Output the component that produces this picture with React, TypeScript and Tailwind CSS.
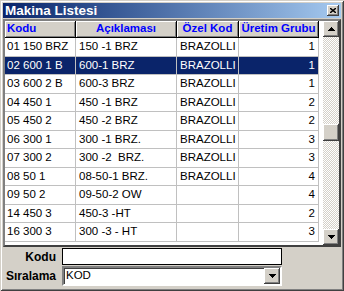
const raised =
  "bg-[#d4d0c8] shadow-[inset_-1px_-1px_0_#404040,inset_1px_1px_0_#ffffff,inset_-2px_-2px_0_#808080]";

const rows = [
  ["01 150 BRZ", "150 -1 BRZ", "BRAZOLLI", "1"],
  ["02 600 1 B", "600-1 BRZ", "BRAZOLLI", "1"],
  ["03 600 2 B", "600-3 BRZ", "BRAZOLLI", "1"],
  ["04 450 1", "450 -1 BRZ", "BRAZOLLI", "2"],
  ["05 450 2", "450 -2 BRZ", "BRAZOLLI", "2"],
  ["06 300 1", "300 -1 BRZ.", "BRAZOLLI", "3"],
  ["07 300 2", "300 -2  BRZ.", "BRAZOLLI", "3"],
  ["08 50 1", "08-50-1 BRZ.", "BRAZOLLI", "4"],
  ["09 50 2", "09-50-2 OW", "", "4"],
  ["14 450 3", "450-3 -HT", "", "2"],
  ["16 300 3", "300 -3 - HT", "", "3"],
];

function Arrow({ down }: { down?: boolean }) {
  return (
    <svg width="7" height="4" viewBox="0 0 7 4" className={down ? "rotate-180" : ""}>
      <path d="M3.5 0 L7 4 L0 4 Z" fill="#000" shapeRendering="crispEdges" />
    </svg>
  );
}

export default function App() {
  return (
    <div className="w-[344px] h-[291px] bg-[#d4d0c8] p-[3px] flex flex-col font-['Liberation_Sans',Arial,sans-serif] shadow-[inset_1px_1px_0_#d4d0c8,inset_-1px_-1px_0_#404040,inset_2px_2px_0_#ffffff,inset_-2px_-2px_0_#808080]">
      {/* title bar */}
      <div className="h-[15px] flex items-center justify-between pl-[2px] pr-[2px] bg-linear-to-r from-[#0a246a] to-[#a6caf0]">
        <span className="text-white font-bold text-[13.5px] leading-none">Makina Listesi</span>
        <div className={`w-[12px] h-[11px] flex items-center justify-center ${raised}`}>
          <svg width="6" height="5" viewBox="0 0 6 5">
            <path d="M0 0 L6 5 M6 0 L0 5" stroke="#000" strokeWidth="1.4" />
          </svg>
        </div>
      </div>

      {/* grid */}
      <div className="mt-[1px] h-[228px] flex bg-white border-2 border-t-[#808080] border-l-[#808080] border-r-[#404040] border-b-[#404040]">
        <div className="flex-1 flex flex-col text-[11.5px] text-black">
          <div className="h-[17px] flex text-[11.5px] font-bold text-[#0000ff]">
            <div className="w-[71px] pl-[2px] flex items-center border-r border-b border-black shadow-[inset_1px_1px_0_#ffffff,inset_-1px_-1px_0_#808080] bg-[#d4d0c8]">
              Kodu
            </div>
            <div className="w-[101px] flex items-center justify-center border-r border-b border-black shadow-[inset_1px_1px_0_#ffffff,inset_-1px_-1px_0_#808080] bg-[#d4d0c8]">
              Açıklaması
            </div>
            <div className="w-[62px] flex items-center justify-center border-r border-b border-black shadow-[inset_1px_1px_0_#ffffff,inset_-1px_-1px_0_#808080] bg-[#d4d0c8]">
              Özel Kod
            </div>
            <div className="w-[80px] flex items-center justify-center border-r border-b border-black shadow-[inset_1px_1px_0_#ffffff,inset_-1px_-1px_0_#808080] bg-[#d4d0c8]">
              Üretim Grubu
            </div>
          </div>
          {rows.map((r, i) => {
            const sel = i === 1;
            const cell = `flex items-center border-r border-b border-[#c0c0c0] whitespace-pre ${
              sel ? "bg-[#0a246a] text-white" : ""
            }`;
            return (
              <div key={r[0]} className="h-[18.5px] flex">
                <div className={`w-[71px] pl-[2px] ${cell}`}>{r[0]}</div>
                <div className={`w-[101px] pl-[3px] ${cell}`}>{r[1]}</div>
                <div className={`w-[62px] pl-[3px] ${cell}`}>{r[2]}</div>
                <div className={`w-[80px] pr-[3px] justify-end ${cell}`}>{r[3]}</div>
              </div>
            );
          })}
        </div>

        {/* scrollbar */}
        <div className="w-[16px] flex flex-col">
          <div className={`h-[16px] flex items-center justify-center ${raised}`}>
            <Arrow />
          </div>
          <div className="flex-1 bg-[repeating-conic-gradient(#d4d0c8_0%_25%,#ffffff_0%_50%)] bg-size-[2px_2px]">
            <div className={`mt-[87px] h-[17px] ${raised}`} />
          </div>
          <div className={`h-[16px] flex items-center justify-center ${raised}`}>
            <Arrow down />
          </div>
        </div>
      </div>

      {/* filter panel */}
      <div className="flex-1 flex flex-col pt-[1px] text-[11.5px]">
        <div className="flex items-center h-[17px]">
          <span className="w-[53px] text-right font-bold text-[12px]">Kodu</span>
          <div className="ml-[6px] w-[220px] h-[17px] bg-white border border-black" />
        </div>
        <div className="flex items-center h-[20px] mt-[1px]">
          <span className="w-[53px] text-right font-bold text-[12px]">Sıralama</span>
          <div className="ml-[6px] w-[220px] h-[20px] bg-white flex items-center border-2 border-t-[#808080] border-l-[#808080] border-r-white border-b-white shadow-[inset_1px_1px_0_#404040]">
            <span className="flex-1 pl-[2px]">KOD</span>
            <div className={`w-[16px] h-[16px] flex items-center justify-center ${raised}`}>
              <Arrow down />
            </div>
          </div>
        </div>
      </div>
    </div>
  );
}
